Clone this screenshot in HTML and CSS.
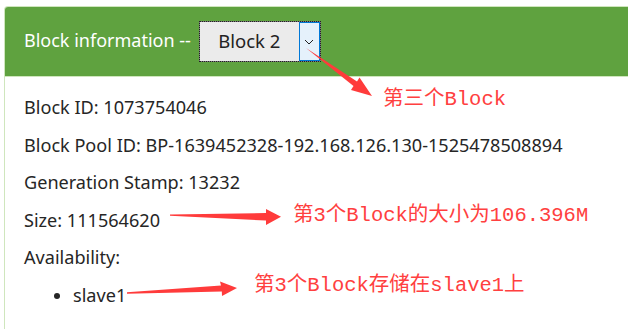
FILE: index.html
```html
<!DOCTYPE html>
<html lang="en">
<head>
    <meta charset="UTF-8">
    <title>Block information</title>
    <link rel="stylesheet" href="styles.css">
</head>
<body>
    <div class="panel">
        <div class="panel-heading">
            <span class="panel-title">Block information --</span>
            <div class="block-select">
                <span class="block-select-value">Block 2</span>
                <span class="block-select-btn">
                    <svg width="10" height="6" viewBox="0 0 10 6"><path d="M1 1 L5 5 L9 1" fill="none" stroke="#222" stroke-width="1"/></svg>
                </span>
            </div>
        </div>
        <div class="panel-body">
            <p>Block ID: 1073754046</p>
            <p>Block Pool ID: BP-1639452328-192.168.126.130-1525478508894</p>
            <p>Generation Stamp: 13232</p>
            <p>Size: 111564620</p>
            <p>Availability:</p>
            <ul class="nodes">
                <li>slave1</li>
            </ul>
        </div>
    </div>

    <!-- screenshot annotations -->
    <svg class="arrows" width="628" height="329" viewBox="0 0 628 329">
        <polygon points="306,48 357,81.5 359.5,77.5 372,96 351,90 353.5,86" fill="#ff3b3b"/>
        <polygon points="170,214.5 266,213 266,209 281,216.8 266,225 266,220.5 170,215.8" fill="#ff3b3b"/>
        <polygon points="127,292.3 221,285.5 220,281.5 237,288 222,296 221.8,291.5 127,293.7" fill="#ff3b3b"/>
    </svg>
    <div class="note note-1">第三个Block</div>
    <div class="note note-2">第3个Block的大小为106.396M</div>
    <div class="note note-3">第3个Block存储在slave1上</div>
</body>
</html>
```

FILE: styles.css
```css
body {
    margin: 0;
    padding: 6px 0 0 4px;
    height: 329px;
    width: 628px;
    box-sizing: border-box;
    overflow: hidden;
    background: #ffffff;
    font-family: 'Noto Sans', 'Open Sans', sans-serif;
    color: #262626;
    position: relative;
}

.panel {
    height: 100%;
    border: 1px solid #cfe6bd;
    border-right: none;
    border-bottom: none;
    border-radius: 4px 0 0 0;
}

.panel-heading {
    height: 69px;
    background: #5fa23f;
    border-bottom: 1px solid #cfe6bd;
    border-radius: 3px 0 0 0;
    display: flex;
    align-items: center;
    padding-left: 19px;
}

.panel-title {
    color: #ffffff;
    font-size: 18px;
    margin-right: 8px;
    margin-top: -4px;
}

.block-select {
    width: 120px;
    height: 39px;
    border: 1px solid #7a7a7a;
    background: #ebebeb;
    outline: 1px dotted #222;
    outline-offset: -1px;
    display: flex;
}

.block-select-value {
    flex: 1;
    text-align: center;
    line-height: 38px;
    font-size: 18.5px;
    color: #222;
}

.block-select-btn {
    width: 19px;
    background: #e5f1fb;
    border: 1px solid #0078d7;
    display: flex;
    align-items: center;
    justify-content: center;
}

.panel-body {
    padding: 12px 0 0 19px;
    font-size: 18.1px;
}

.panel-body p {
    margin: 0;
    line-height: 37.5px;
}

.nodes {
    margin: 0;
    padding-left: 49px;
    line-height: 37.5px;
}

.arrows {
    position: absolute;
    left: 0;
    top: 0;
}

.note {
    position: absolute;
    color: #ff4040;
    font-family: 'Liberation Mono', 'Noto Sans CJK SC', monospace;
    font-size: 20.5px;
    line-height: 24px;
    white-space: nowrap;
}

.note-1 { left: 383px; top: 88px; }
.note-2 { left: 293px; top: 204px; }
.note-3 { left: 254px; top: 274px; }
```
